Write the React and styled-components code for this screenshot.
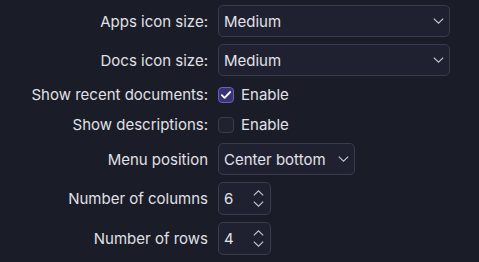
import styled, { createGlobalStyle } from "styled-components";

const GlobalStyle = createGlobalStyle`
  html, body {
    margin: 0;
    padding: 0;
    background: #1a1c28;
  }
  body {
    font-family: Inter, "Noto Sans", sans-serif;
    color: #e2e2e8;
  }
`;

const Form = styled.div`
  display: grid;
  grid-template-columns: 208px auto;
  grid-template-rows: 32px 32px 23px 23px 32px 33px 33px;
  align-content: start;
  column-gap: 10px;
  row-gap: 7px;
  padding-top: 5px;
  width: 479px;
  height: 262px;
  box-sizing: border-box;
`;

const Label = styled.div`
  display: flex;
  align-items: center;
  justify-content: flex-end;
  font-size: 15px;
  color: #e0e0e6;
  white-space: nowrap;
`;

const Field = styled.div`
  display: flex;
  align-items: center;
`;

const Select = styled.div`
  display: flex;
  align-items: center;
  justify-content: space-between;
  box-sizing: border-box;
  width: ${(p) => p.$w}px;
  height: 32px;
  padding: 0 5px 0 5px;
  background: #1f2131;
  border: 1px solid #393b4b;
  border-radius: 5px;
  font-size: 15px;
  color: #e2e2e8;
`;

const Spin = styled(Select)`
  height: 33px;
  padding-right: 6px;
`;

const Arrows = styled.div`
  display: flex;
  flex-direction: column;
  gap: 5px;
`;

const Box = styled.div`
  width: 16px;
  height: 16px;
  box-sizing: border-box;
  border-radius: 4px;
  display: flex;
  align-items: center;
  justify-content: center;
  background: ${(p) => (p.$on ? "#3a3472" : "#20222f")};
  border: 1px solid ${(p) => (p.$on ? "#6a5fc6" : "#3a3c4c")};
`;

const Check = styled.label`
  display: flex;
  align-items: center;
  gap: 7px;
  font-size: 15px;
  color: #e2e2e8;
`;

const Chevron = ({ up }) => (
  <svg width="11" height="6" viewBox="0 0 11 6" fill="none">
    <path
      d={up ? "M0.8 5.4 L5.5 0.8 L10.2 5.4" : "M0.8 0.6 L5.5 5.2 L10.2 0.6"}
      stroke="#c8c8d2"
      strokeWidth="1.1"
    />
  </svg>
);

const Tick = () => (
  <svg width="12" height="10" viewBox="0 0 12 10" fill="none">
    <path d="M1.8 5.2 L4.6 7.8 L10.2 2" stroke="#ffffff" strokeWidth="1.8" strokeLinecap="round" strokeLinejoin="round" />
  </svg>
);

export default function App() {
  return (
    <>
      <GlobalStyle />
      <Form>
        <Label>Apps icon size:</Label>
        <Field>
          <Select $w={232}>
            Medium
            <Chevron />
          </Select>
        </Field>

        <Label>Docs icon size:</Label>
        <Field>
          <Select $w={232}>
            Medium
            <Chevron />
          </Select>
        </Field>

        <Label>Show recent documents:</Label>
        <Field>
          <Check>
            <Box $on>
              <Tick />
            </Box>
            Enable
          </Check>
        </Field>

        <Label>Show descriptions:</Label>
        <Field>
          <Check>
            <Box />
            Enable
          </Check>
        </Field>

        <Label>Menu position</Label>
        <Field>
          <Select $w={137}>
            Center bottom
            <Chevron />
          </Select>
        </Field>

        <Label>Number of columns</Label>
        <Field>
          <Spin $w={53}>
            6
            <Arrows>
              <Chevron up />
              <Chevron />
            </Arrows>
          </Spin>
        </Field>

        <Label>Number of rows</Label>
        <Field>
          <Spin $w={53}>
            4
            <Arrows>
              <Chevron up />
              <Chevron />
            </Arrows>
          </Spin>
        </Field>
      </Form>
    </>
  );
}
